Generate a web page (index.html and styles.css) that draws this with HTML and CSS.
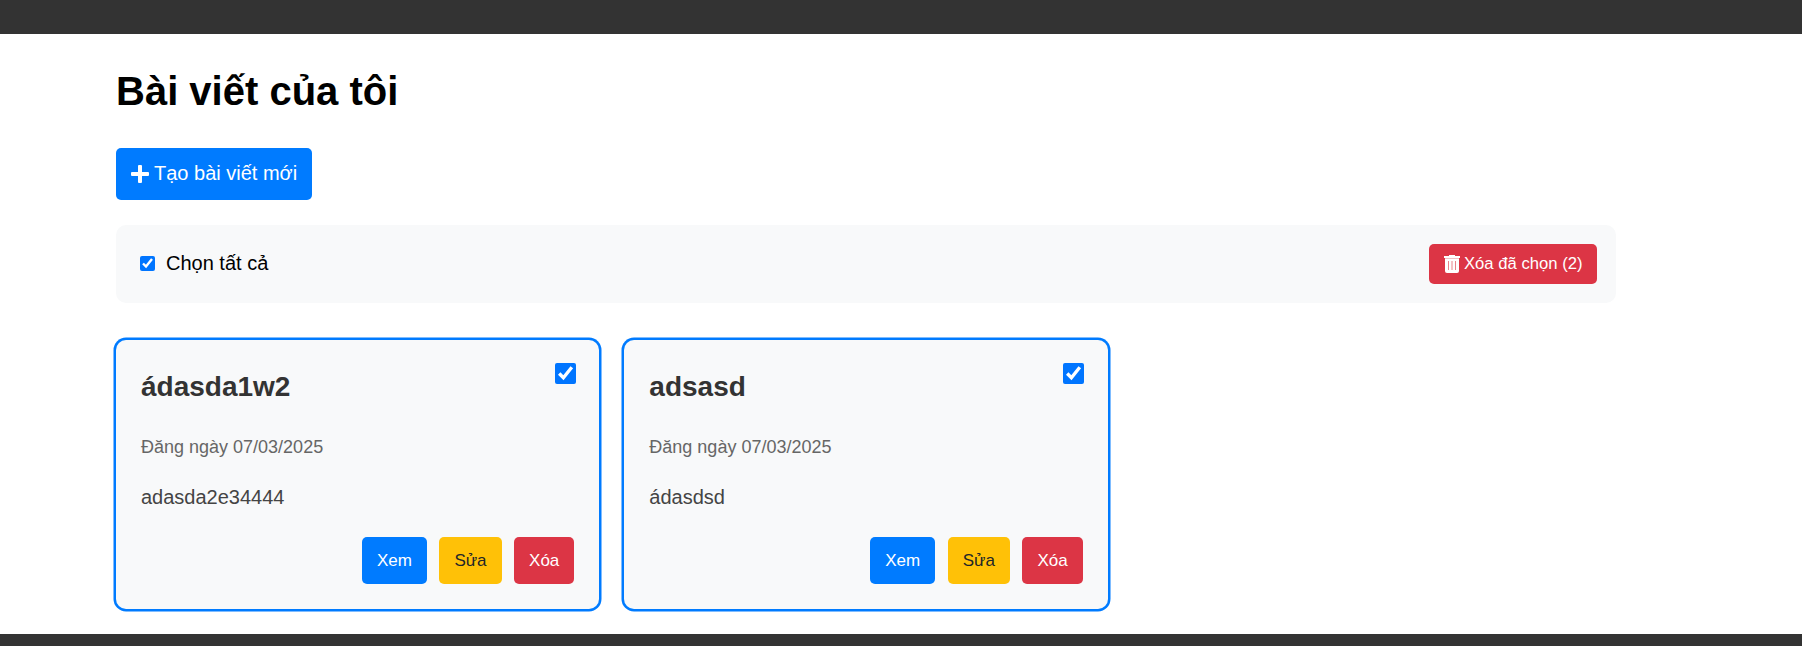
FILE: index.html
```html
<!DOCTYPE html>
<html lang="vi">
<head>
<meta charset="utf-8">
<title>Bài viết của tôi</title>
<link rel="stylesheet" href="styles.css">
</head>
<body>
<header class="site-header"></header>
<main class="container">
  <h1 class="page-title">Bài viết của tôi</h1>
  <a class="btn-create"><svg class="icon-plus" viewBox="0 0 18 18"><path d="M8 0h2q1 0 1 1v6h6q1 0 1 1v2q0 1-1 1h-6v6q0 1-1 1H8q-1 0-1-1v-6H1q-1 0-1-1V8q0-1 1-1h6V1q0-1 1-1z" fill="currentColor"/></svg><span>Tạo bài viết mới</span></a>
  <div class="bulk-bar">
    <label class="select-all"><input type="checkbox" class="check-small" checked><span>Chọn tất cả</span></label>
    <button class="btn-bulk"><svg class="icon-trash" viewBox="0 0 16 18"><path d="M5 1V0h6v1h5v2H0V1z" fill="#fff"/><path d="M1 3h14v1H1z" fill="#f3c0c5"/><path d="M1 4h14v12q0 2-2 2H3q-2 0-2-2z" fill="#fff"/><path d="M4.500 6v9M8 6v9M11.500 6v9" stroke="#e8848a" fill="none"/></svg><span>Xóa đã chọn (2)</span></button>
  </div>
  <div class="post-grid">
    <article class="post-card">
      <input type="checkbox" class="check-post" checked>
      <h2 class="post-title">ádasda1w2</h2>
      <p class="post-date">Đăng ngày 07/03/2025</p>
      <p class="post-text">adasda2e34444</p>
      <div class="post-actions"><a class="btn btn-view">Xem</a><a class="btn btn-edit">Sửa</a><a class="btn btn-delete">Xóa</a></div>
    </article>
    <article class="post-card">
      <input type="checkbox" class="check-post" checked>
      <h2 class="post-title">adsasd</h2>
      <p class="post-date">Đăng ngày 07/03/2025</p>
      <p class="post-text">ádasdsd</p>
      <div class="post-actions"><a class="btn btn-view">Xem</a><a class="btn btn-edit">Sửa</a><a class="btn btn-delete">Xóa</a></div>
    </article>
  </div>
</main>
<footer class="site-footer"></footer>
</body>
</html>
```

FILE: styles.css
```css
* { box-sizing: border-box; }
body {
  margin: 0;
  height: 646px;
  overflow: hidden;
  display: flex;
  flex-direction: column;
  background: #fff;
  font-family: Arial, "Liberation Sans", sans-serif;
  font-size: 20px;
  color: #000;
}
.site-header { flex: none; height: 34px; background: #333; }
.site-footer { flex: 1; background: #333; }
.container {
  flex: none;
  width: 1500px;
  height: 600px;
  margin-left: 116px;
  display: flex;
  flex-direction: column;
  align-items: flex-start;
}
.page-title { margin: 34px 0 0; font-size: 40px; line-height: 46px; }
.btn-create {
  display: flex;
  align-items: center;
  gap: 5px;
  width: 196px;
  height: 52px;
  margin-top: 34px;
  padding: 0 0 1px 15px;
  border-radius: 5px;
  background: #007bff;
  color: #fff;
  white-space: nowrap;
}
.icon-plus { width: 18px; height: 18px; }
.bulk-bar {
  display: flex;
  align-items: center;
  justify-content: space-between;
  width: 100%;
  height: 78px;
  margin-top: 25px;
  padding: 0 19px 0 24px;
  border-radius: 10px;
  background: #f8f9fa;
}
.select-all { display: flex; align-items: center; gap: 11px; padding-bottom: 1px; }
.check-small { width: 15px; height: 15px; margin: 0; }
.btn-bulk {
  display: flex;
  align-items: center;
  gap: 4px;
  width: 168px;
  height: 40px;
  padding: 0 0 1px 15px;
  border: 0;
  border-radius: 5px;
  background: #dc3545;
  color: #fff;
  font: 16.67px Arial, "Liberation Sans", sans-serif;
  white-space: nowrap;
}
.icon-trash { width: 16px; height: 18px; }
.post-grid {
  display: grid;
  grid-template-columns: repeat(3, 1fr);
  gap: 25px;
  width: 100%;
  margin-top: 37px;
}
.post-card {
  position: relative;
  height: 269px;
  padding: 31px 25px 25px;
  border-radius: 10px;
  background: #f8f9fa;
  box-shadow: 0 0 0 2.5px #007bff;
  display: flex;
  flex-direction: column;
}
.check-post { position: absolute; top: 23px; right: 23.5px; width: 21.25px; height: 21.25px; margin: 0; }
.post-title { margin: 0; font-size: 28px; line-height: 32px; color: #333; }
.post-date { margin: 34px 0 0; font-size: 18px; line-height: 20px; color: #666; }
.post-text { margin: 29px 0 0; line-height: 22px; color: #444; }
.post-actions { display: flex; justify-content: flex-end; gap: 12.5px; margin-top: auto; }
.btn { padding: 0 15px; border-radius: 5px; font-size: 17px; line-height: 47px; color: #fff; }
.btn-view { background: #007bff; }
.btn-edit { background: #ffc107; color: #212529; }
.btn-delete { background: #dc3545; }
```
